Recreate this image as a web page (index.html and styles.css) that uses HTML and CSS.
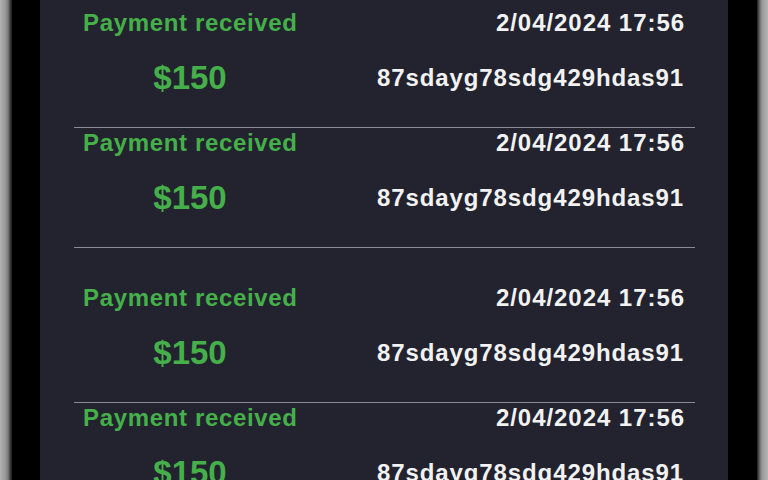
FILE: index.html
```html
<!DOCTYPE html>
<html>
<head>
<meta charset="utf-8">
<link rel="stylesheet" href="styles.css">
</head>
<body>
<div class="device">
  <div class="frame frame-left"></div>
  <div class="bezel"></div>
  <main class="screen">
    <div class="txn">
      <div class="row-top"><span class="status">Payment received</span><span class="date">2/04/2024 17:56</span></div>
      <div class="row-bottom"><span class="amount">$150</span><span class="hash">87sdayg78sdg429hdas91</span></div>
    </div>
    <div class="txn">
      <div class="row-top"><span class="status">Payment received</span><span class="date">2/04/2024 17:56</span></div>
      <div class="row-bottom"><span class="amount">$150</span><span class="hash">87sdayg78sdg429hdas91</span></div>
    </div>
    <div class="txn txn-spaced">
      <div class="row-top"><span class="status">Payment received</span><span class="date">2/04/2024 17:56</span></div>
      <div class="row-bottom"><span class="amount">$150</span><span class="hash">87sdayg78sdg429hdas91</span></div>
    </div>
    <div class="txn">
      <div class="row-top"><span class="status">Payment received</span><span class="date">2/04/2024 17:56</span></div>
      <div class="row-bottom"><span class="amount">$150</span><span class="hash">87sdayg78sdg429hdas91</span></div>
    </div>
  </main>
  <div class="bezel bezel-right"></div>
  <div class="frame frame-right"></div>
</div>
</body>
</html>
```
FILE: styles.css
```css
html, body {
  margin: 0;
  padding: 0;
  height: 100%;
  overflow: hidden;
  background: #000;
}

.device {
  display: flex;
  height: 480px;
  width: 768px;
}

.frame-left {
  width: 12px;
  background: linear-gradient(to right, #b2b2b2 0, #9a9a9a 5px, #7c7c7c 8px, #444 10px, #1a1a1a 12px);
}

.frame-right {
  width: 11px;
  background: linear-gradient(to right, #1a1a1a 0, #555 2px, #8a8a8a 4px, #a4a4a4 7px, #b4b4b4 11px);
}

.bezel {
  width: 28px;
  background: #000;
}

.bezel-right {
  width: 29px;
}

.screen {
  width: 688px;
  background: #22232e;
  padding: 8px 33px 0 34px;
  box-sizing: border-box;
  display: flex;
  flex-direction: column;
  font-family: "Liberation Sans", Arial, sans-serif;
  font-weight: bold;
}

.txn {
  padding: 1px 10px 30px 9px;
  border-bottom: 1px solid #8a8b95;
  display: flex;
  flex-direction: column;
  gap: 22px;
  flex-shrink: 0;
}

.txn-spaced {
  margin-top: 35px;
}

.row-top,
.row-bottom {
  display: flex;
  justify-content: space-between;
  align-items: center;
}

.row-top {
  height: 28px;
}

.row-bottom {
  height: 38px;
}

.status {
  color: #45b04a;
  font-size: 24px;
  letter-spacing: 0.65px;
}

.date {
  color: #f2f2f2;
  font-size: 24px;
  letter-spacing: 0.95px;
}

.amount {
  color: #45b04a;
  font-size: 33px;
  width: 214px;
  text-align: center;
}

.hash {
  color: #f2f2f2;
  font-size: 24px;
  letter-spacing: 0.9px;
  margin-right: 1px;
}
```
